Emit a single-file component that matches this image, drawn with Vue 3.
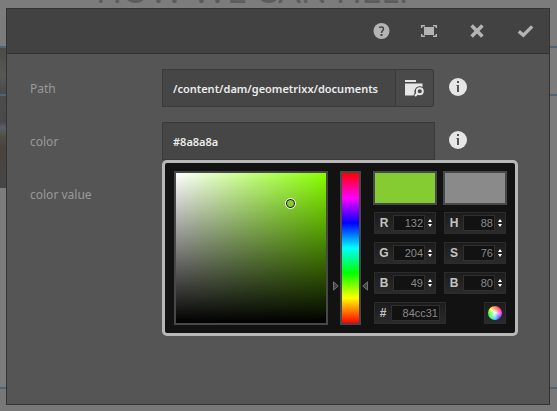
<template>
  <div class="page">
    <!-- page behind the dialog -->
    <div class="backdrop" aria-hidden="true">
      <div class="heading">HOW WE CAN HELP</div>
      <div class="band band-top"><div class="photo sky"></div></div>
      <div class="band band-main"><div class="photo ground"></div></div>
      <div class="band band-foot"></div>
    </div>

    <form class="dialog" @submit.prevent>
      <header class="dialog-header">
        <button type="button" class="action" aria-label="Help">
          <svg width="18" height="18" viewBox="0 0 18 18">
            <circle cx="9.5" cy="9" r="8" fill="#b4b4b4" />
            <path d="M7.2 5.6C8.5 4.6 11.8 4.6 11.5 7.1C11.3 8.8 9.5 8.8 9.5 11" fill="none" stroke="#444" stroke-width="1.5" />
            <rect x="8.5" y="12" width="2" height="2" fill="#444" />
          </svg>
        </button>
        <button type="button" class="action" aria-label="Fullscreen">
          <svg width="18" height="18" viewBox="0 0 18 18">
            <rect x="4" y="5" width="10" height="8" fill="#b4b4b4" />
            <path d="M1.7 6V3.7H5M13 3.7H16.3V6M16.3 12V14.3H13M5 14.3H1.7V12" fill="none" stroke="#b4b4b4" stroke-width="1.5" />
          </svg>
        </button>
        <button type="button" class="action" aria-label="Close">
          <svg width="18" height="18" viewBox="0 0 18 18">
            <path d="M3.6 3.6L14.4 14.4M14.4 3.6L3.6 14.4" fill="none" stroke="#b4b4b4" stroke-width="3.6" />
          </svg>
        </button>
        <button type="submit" class="action" aria-label="Done">
          <svg width="18" height="18" viewBox="0 0 18 18">
            <path d="M2.8 9.4L7.4 13.3L16.2 4.4" fill="none" stroke="#b4b4b4" stroke-width="3.4" />
          </svg>
        </button>
      </header>

      <div class="dialog-body">
        <div class="field">
          <label for="path">Path</label>
          <div class="control">
            <input id="path" v-model="path" class="text-input" type="text" />
            <button type="button" class="browse" aria-label="Browse">
              <svg width="20" height="18" viewBox="0 0 20 18">
                <path d="M0 1H11V3H0Z M0 4.5H17.5V8H12L9.5 11V16.5H0Z" fill="#e6e6e6" />
                <path d="M12.6 14.6L9.6 17.6" stroke="#4a4a4a" stroke-width="4" />
                <circle cx="14.8" cy="12.2" r="5" fill="#4a4a4a" />
                <circle cx="14.8" cy="12.2" r="3" fill="none" stroke="#e6e6e6" stroke-width="1.9" />
                <path d="M12.6 14.4L10 17" stroke="#e6e6e6" stroke-width="2.2" />
              </svg>
            </button>
          </div>
          <button type="button" class="info" aria-label="Path info">
            <svg width="18" height="18" viewBox="0 0 18 18">
              <circle cx="9" cy="9" r="9" fill="#e6e6e6" />
              <path d="M8 3H10V5H8Z M7.5 7H10V14H8V8H7.5Z" fill="#555" />
            </svg>
          </button>
        </div>

        <div class="field">
          <label for="color">color</label>
          <div class="control">
            <input id="color" v-model="color" class="text-input" type="text" />

            <div class="picker">
              <div class="map" :style="{ backgroundColor: hueColor }">
                <span class="marker" :style="{ left: hsb.S + '%', top: 100 - hsb.B + '%' }"></span>
              </div>

              <div class="hue">
                <input v-model.number="hsb.H" class="hue-bar" type="range" min="0" max="360" aria-label="Hue" />
                <div class="hue-pointer" :style="{ bottom: hsb.H / 3.6 + '%' }">
                  <svg width="6" height="10" viewBox="0 0 6 10">
                    <path d="M.5 .8V9.2L5.3 5Z" fill="#444" stroke="#707070" />
                  </svg>
                  <svg width="6" height="10" viewBox="0 0 6 10">
                    <path d="M5.5 .8V9.2L.7 5Z" fill="#444" stroke="#707070" />
                  </svg>
                </div>
              </div>

              <div class="values">
                <div class="swatches">
                  <div class="swatch" :style="{ backgroundColor: '#' + hex }"></div>
                  <div class="swatch" :style="{ backgroundColor: color }"></div>
                </div>
                <div class="channels">
                  <div v-for="c in channels" :key="c.id" class="channel">
                    <label :for="c.id">{{ c.name }}</label>
                    <input :id="c.id" v-model.number="c.model[c.name]" type="text" inputmode="numeric" />
                    <button type="button" class="stepper" :aria-label="'Step ' + c.id" @click="c.model[c.name]++">
                      <svg width="6" height="8" viewBox="0 0 6 8">
                        <path d="M3 0L5 3H1Z M3 8L5 5H1Z" fill="#fff" />
                      </svg>
                    </button>
                  </div>
                </div>
                <div class="hex-row">
                  <div class="channel hex">
                    <label for="hex">#</label>
                    <input id="hex" v-model="hex" type="text" />
                  </div>
                  <button type="button" class="wheel-button" aria-label="Apply color">
                    <span class="wheel"></span>
                  </button>
                </div>
              </div>
            </div>
          </div>
          <button type="button" class="info" aria-label="Color info">
            <svg width="18" height="18" viewBox="0 0 18 18">
              <circle cx="9" cy="9" r="9" fill="#e6e6e6" />
              <path d="M8 3H10V5H8Z M7.5 7H10V14H8V8H7.5Z" fill="#555" />
            </svg>
          </button>
        </div>

        <div class="field">
          <span class="caption">color value</span>
        </div>
      </div>
    </form>
  </div>
</template>

<script setup>
import { computed, reactive, ref } from 'vue'

const path = ref('/content/dam/geometrixx/documents')
const color = ref('#8a8a8a')
const hex = ref('84cc31')
const rgb = reactive({ R: 132, G: 204, B: 49 })
const hsb = reactive({ H: 88, S: 76, B: 80 })

const channels = [
  { id: 'red', name: 'R', model: rgb },
  { id: 'hue', name: 'H', model: hsb },
  { id: 'green', name: 'G', model: rgb },
  { id: 'saturation', name: 'S', model: hsb },
  { id: 'blue', name: 'B', model: rgb },
  { id: 'brightness', name: 'B', model: hsb }
]

const hueColor = computed(() => `hsl(${hsb.H}, 100%, 50%)`)
</script>

<style>
body {
  margin: 0;
}
</style>

<style scoped>
.page,
.page * {
  box-sizing: border-box;
}

.page {
  position: relative;
  min-height: 100vh;
  padding: 8px 7px 6px 6px;
  display: flex;
  font-family: 'Noto Sans', 'Open Sans', sans-serif;
  font-size: 12px;
}

button {
  padding: 0;
  border: 0;
  background: none;
  display: flex;
  align-items: center;
  justify-content: center;
  cursor: pointer;
}

input {
  margin: 0;
  min-width: 0;
  outline: none;
}

svg {
  display: block;
}

/* backdrop */
.backdrop {
  position: absolute;
  inset: 0;
  overflow: hidden;
  display: flex;
  flex-direction: column;
  background: #7c7c7c;
}

.heading {
  height: 60px;
  flex-shrink: 0;
  margin-top: -14px;
  margin-right: 42px;
  font-family: Lato, sans-serif;
  font-size: 34px;
  line-height: 8px;
  color: #5c5c5c;
  text-align: center;
}

.band {
  border-top: 2px solid #4f6475;
}

.band-top {
  height: 48px;
}

.band-main {
  height: 293px;
}

.band-foot {
  flex: 1;
  background: #787878;
}

.photo {
  width: 6px;
}

.sky {
  height: 46px;
  background: linear-gradient(#4b4b49, #575756 60%, #4a4a4a);
}

.ground {
  height: 92px;
  background: linear-gradient(#4c4c4c, #494949 28%, #5a5d68 34%, #4c5145 44%, #4a433c 55%, #464646);
}

/* dialog */
.dialog {
  position: relative;
  flex: 1;
  border: 1px solid #333;
  background: #555;
}

.dialog-header {
  height: 45px;
  padding: 0 15px;
  display: flex;
  align-items: center;
  justify-content: flex-end;
  gap: 30px;
  background: #424242;
  border-bottom: 1px solid #333;
}

.action {
  width: 18px;
  height: 18px;
}

.dialog-body {
  padding: 15px 23px;
  display: flex;
  flex-direction: column;
  gap: 15px;
}

.field {
  display: flex;
  height: 38px;
}

.field > label,
.caption {
  width: 132px;
  line-height: 40px;
  color: #999;
}

.control {
  position: relative;
  width: 273px;
  display: flex;
}

.text-input {
  flex: 1;
  padding: 0 10px;
  border: 1px solid #3a3a3a;
  background: #464646;
  color: #ececec;
  font-family: inherit;
  font-size: 11px;
  font-weight: 600;
}

.browse {
  width: 38px;
  margin-right: 1px;
  border: 1px solid #3a3a3a;
  border-left: 0;
  border-radius: 0 3px 3px 0;
  background: #4a4a4a;
}

.info {
  width: 18px;
  height: 36px;
  margin-left: 14px;
}

/* color picker */
.picker {
  position: absolute;
  top: 38px;
  left: 0;
  padding: 8px;
  padding-left: 9px;
  display: flex;
  gap: 12px;
  border: 3px solid #b8b8b8;
  border-radius: 5px;
  background: #121212;
  font-family: 'Liberation Sans', Arial, sans-serif;
  z-index: 1;
}

.map {
  position: relative;
  width: 154px;
  height: 154px;
  border: 2px solid #484848;
  background-image: linear-gradient(to top, #000, transparent), linear-gradient(to right, #fff, transparent);
}

.marker {
  position: absolute;
  width: 11px;
  height: 11px;
  margin: -5px;
  border: 1px solid #fff;
  border-radius: 50%;
  box-shadow: inset 0 0 0 1px #000;
}

.hue {
  position: relative;
  width: 21px;
  height: 154px;
  border: 2px solid #484848;
}

.hue-bar {
  appearance: none;
  display: block;
  width: 17px;
  height: 150px;
  writing-mode: vertical-lr;
  direction: rtl;
  background: linear-gradient(#f00, #f0f, #00f, #0ff, #0f0, #ff0, #f00);
}

.hue-bar::-webkit-slider-thumb {
  appearance: none;
  width: 17px;
  height: 1px;
}

.hue-pointer {
  position: absolute;
  left: -9px;
  right: -9px;
  margin-bottom: -5px;
  display: flex;
  justify-content: space-between;
  pointer-events: none;
}

.values {
  display: flex;
  flex-direction: column;
  gap: 7px;
}

.swatches {
  display: flex;
  gap: 6px;
}

.swatch {
  width: 64px;
  height: 34px;
  border: 2px solid #484848;
}

.channels {
  display: grid;
  grid-template-columns: 62px 62px;
  gap: 8px;
  margin: 0 1px;
}

.channel {
  height: 22px;
  display: flex;
  align-items: center;
  border: 1px solid #2c2c2c;
  background: linear-gradient(#1c1c1c, #2a2a2a);
}

.channel label {
  width: 18px;
  text-align: center;
  font-size: 12px;
  font-weight: 700;
  color: #c4c4c4;
}

.channel input {
  width: 32px;
  height: 16px;
  padding: 0 1px;
  border: 1px solid #303030;
  background: #121212;
  color: #898989;
  font-family: inherit;
  font-size: 11px;
  text-align: right;
}

.stepper {
  width: 10px;
  height: 16px;
}

.hex-row {
  display: flex;
  justify-content: space-between;
  margin: 1px 1px 0;
}

.hex {
  width: 72px;
}

.hex label {
  width: 16px;
}

.hex input {
  width: 49px;
}

.wheel-button {
  width: 22px;
  height: 22px;
  border: 1px solid #2c2c2c;
  background: linear-gradient(#1c1c1c, #2a2a2a);
}

.wheel {
  width: 14px;
  height: 14px;
  border-radius: 50%;
  background: radial-gradient(#fff, transparent 70%), conic-gradient(#f66, #f33, #f3f, #44f, #3cf, #3f6, #3f3, #ff3, #f66);
}
</style>
